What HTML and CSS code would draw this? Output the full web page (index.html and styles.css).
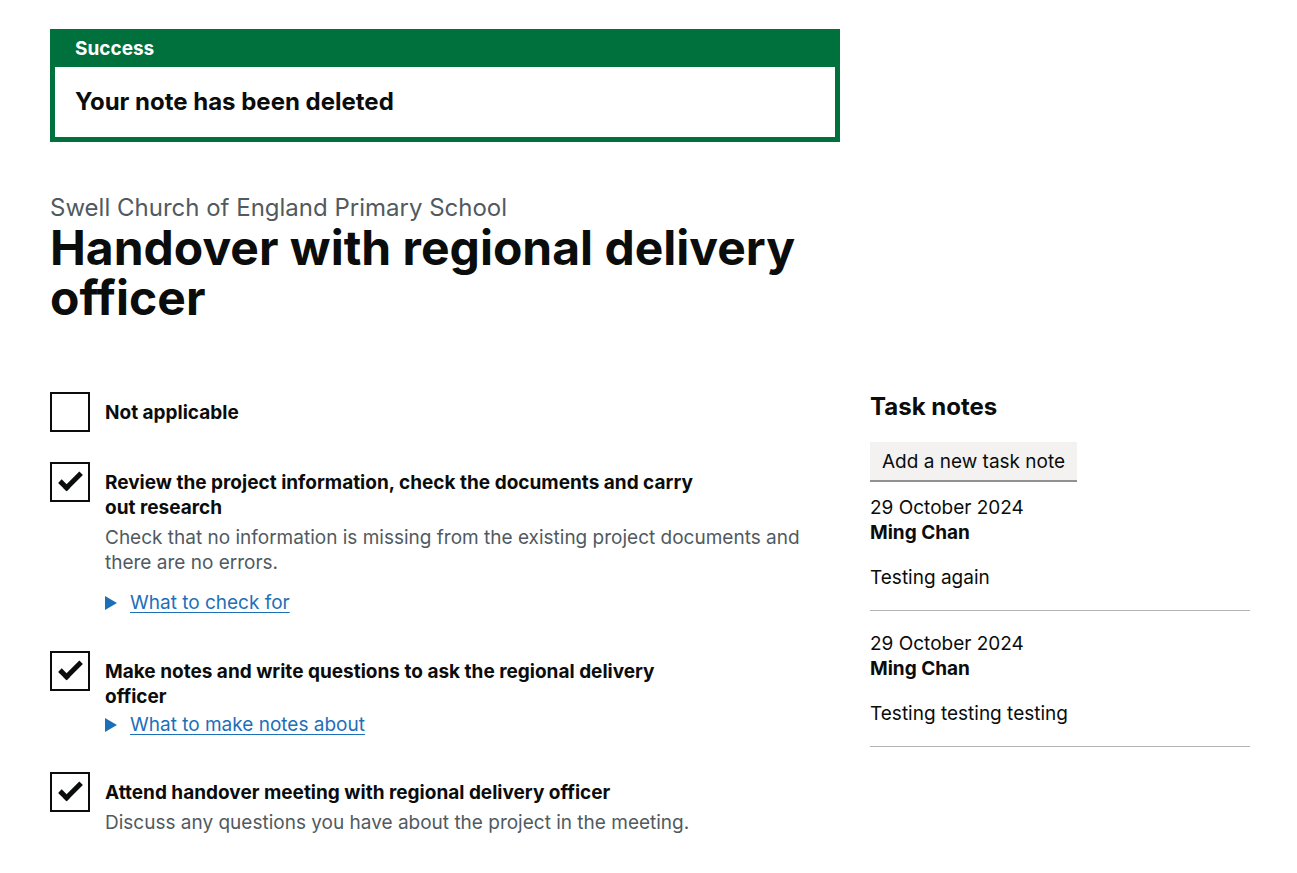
FILE: index.html
```html
<!DOCTYPE html>
<html lang="en">
<head>
<meta charset="utf-8">
<title>Handover with regional delivery officer</title>
<link rel="stylesheet" href="styles.css">
</head>
<body>
<div class="container">
  <main class="main">
    <div class="row">
      <div class="col-two-thirds">
        <div class="banner" role="alert">
          <div class="banner-header">
            <h2 class="banner-title">Success</h2>
          </div>
          <div class="banner-content">
            <h3 class="banner-heading">Your note has been deleted</h3>
          </div>
        </div>
        <span class="caption">Swell Church of England Primary School</span>
        <h1 class="heading-xl">Handover with regional delivery officer</h1>
      </div>
    </div>

    <div class="row">
      <div class="col-two-thirds">
        <div class="checkboxes checkboxes-na">
          <div class="cb-item">
            <span class="cb-box"></span>
            <label class="cb-label">Not applicable</label>
          </div>
        </div>

        <div class="checkboxes">
          <div class="cb-item">
            <span class="cb-box checked"></span>
            <label class="cb-label">Review the project information, check the documents and carry out research</label>
            <div class="cb-hint">Check that no information is missing from the existing project documents and there are no errors.</div>
            <div class="details"><span class="summary"><span class="summary-text">What to check for</span></span></div>
          </div>

          <div class="cb-item">
            <span class="cb-box checked"></span>
            <label class="cb-label">Make notes and write questions to ask the regional delivery officer</label>
            <div class="details details-tight"><span class="summary"><span class="summary-text">What to make notes about</span></span></div>
          </div>

          <div class="cb-item">
            <span class="cb-box checked"></span>
            <label class="cb-label">Attend handover meeting with regional delivery officer</label>
            <div class="cb-hint">Discuss any questions you have about the project in the meeting.</div>
          </div>
        </div>
      </div>

      <div class="col-one-third">
        <h2 class="heading-m">Task notes</h2>
        <a class="button-secondary" href="#">Add a new task note</a>
        <div class="note">
          <p class="note-date">29 October 2024</p>
          <p class="note-author">Ming Chan</p>
          <p class="note-body">Testing again</p>
          <hr class="note-rule">
        </div>
        <div class="note">
          <p class="note-date">29 October 2024</p>
          <p class="note-author">Ming Chan</p>
          <p class="note-body">Testing testing testing</p>
          <hr class="note-rule">
        </div>
      </div>
    </div>
  </main>
</div>
</body>
</html>
```

FILE: styles.css
```css
* { box-sizing: border-box; }

html, body {
  margin: 0;
  padding: 0;
  background: #ffffff;
}

body {
  font-family: Inter, "Noto Sans", "Liberation Sans", sans-serif;
  color: #0b0c0c;
  font-size: 19px;
  line-height: 25px;
}

.container {
  width: 1200px;
  margin-left: 50px;
}

.main {
  padding-top: 29px;
  padding-bottom: 40px;
}

.row {
  display: flex;
  margin: 0 -15px;
}

.col-two-thirds {
  width: 820px;
  padding: 0 15px;
}

.col-one-third {
  width: 410px;
  padding: 0 15px;
}

/* Notification banner */
.banner {
  border: 5px solid #00703c;
  background: #00703c;
  margin-bottom: 50px;
}

.banner-header {
  padding: 2px 20px 5px;
  border-bottom: 1px solid transparent;
}

.banner-title {
  margin: 0;
  font-size: 19px;
  line-height: 25px;
  font-weight: 700;
  color: #ffffff;
}

.banner-content {
  background: #ffffff;
  padding: 20px;
}

.banner-heading {
  margin: 0;
  font-size: 24px;
  line-height: 30px;
  font-weight: 700;
}

/* Headings */
.caption {
  display: block;
  font-size: 24px;
  line-height: 25px;
  padding-top: 3px;
  color: #505a5f;
  margin-bottom: 3px;
}

.heading-xl {
  margin: 0 0 69px;
  font-size: 48px;
  line-height: 50px;
  font-weight: 700;
}

.heading-m {
  margin: 0 0 20px;
  font-size: 24px;
  line-height: 30px;
  font-weight: 700;
}

/* Checkboxes */
.checkboxes-na {
  margin-bottom: 30px;
}

.cb-item {
  position: relative;
  min-height: 40px;
  padding-left: 40px;
  margin-bottom: 10px;
}

.cb-box {
  position: absolute;
  top: 0;
  left: 0;
  width: 40px;
  height: 40px;
  border: 2px solid #0b0c0c;
  background: transparent;
}

.cb-box.checked::after {
  content: "";
  position: absolute;
  top: 9px;
  left: 7px;
  width: 23px;
  height: 12px;
  transform: rotate(-45deg);
  border: solid #0b0c0c;
  border-width: 0 0 5px 5px;
  border-top-color: transparent;
  box-sizing: border-box;
}

.cb-label {
  display: block;
  padding: 8px 15px 5px;
  font-weight: 700;
  max-width: 630px;
}

.cb-hint {
  padding: 0 15px;
  color: #505a5f;
  margin-bottom: 15px;
}

.cb-item:last-child .cb-hint {
  margin-bottom: 0;
}

.details {
  padding-left: 15px;
  margin-bottom: 36px;
}

.details-tight {
  margin-top: -2px;
  margin-bottom: 35px;
}

.summary {
  position: relative;
  display: inline-block;
  padding-left: 25px;
  color: #1d70b8;
}

.summary::before {
  content: "";
  position: absolute;
  left: 0;
  top: 6px;
  width: 0;
  height: 0;
  border-style: solid;
  border-color: transparent;
  border-width: 7px 0 7px 12px;
  border-left-color: #1d70b8;
}

.summary-text {
  text-decoration: underline;
  text-decoration-thickness: 1px;
  text-underline-offset: 3px;
}

/* Button */
.button-secondary {
  display: inline-block;
  font-size: 19px;
  line-height: 19px;
  padding: 8px 10px 7px;
  border: 2px solid transparent;
  background: #f3f2f1;
  color: #0b0c0c;
  text-decoration: none;
  box-shadow: 0 2px 0 #929191;
  margin-bottom: 15px;
}

/* Notes */
.note p {
  margin: 0;
}

.note .note-author {
  font-weight: 700;
}

.note .note-body {
  margin: 20px 0 20px;
}

.note-rule {
  border: 0;
  border-top: 1px solid #b1b4b6;
  margin: 0 0 20px;
  height: 0;
}
```
